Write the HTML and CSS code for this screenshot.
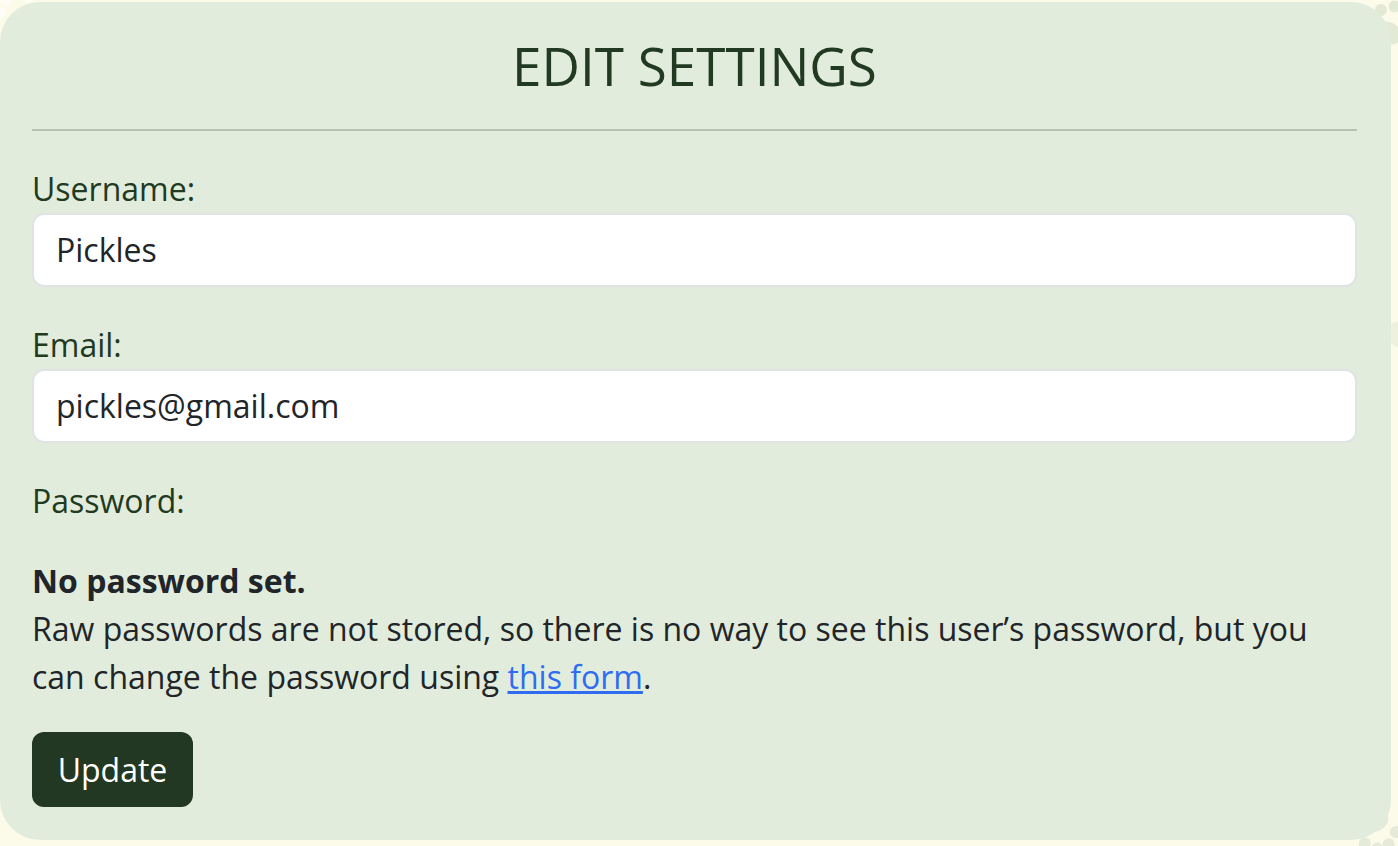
FILE: index.html
```html
<!DOCTYPE html>
<html lang="en">
<head>
<meta charset="utf-8">
<title>Edit Settings</title>
<link rel="stylesheet" href="styles.css">
</head>
<body>
<div class="paws" aria-hidden="true">
  <svg class="paw paw-tl" viewBox="0 0 60 60"><g fill="currentColor"><ellipse cx="30" cy="40" rx="14" ry="11"/><circle cx="14" cy="22" r="6"/><circle cx="25" cy="13" r="6"/><circle cx="37" cy="13" r="6"/><circle cx="47" cy="22" r="6"/></g></svg>
  <svg class="paw paw-tr" viewBox="0 0 60 60"><g fill="currentColor"><ellipse cx="30" cy="40" rx="14" ry="11"/><circle cx="14" cy="22" r="6"/><circle cx="25" cy="13" r="6"/><circle cx="37" cy="13" r="6"/><circle cx="47" cy="22" r="6"/></g></svg>
  <svg class="paw paw-r" viewBox="0 0 60 60"><g fill="currentColor"><ellipse cx="30" cy="40" rx="14" ry="11"/><circle cx="14" cy="22" r="6"/><circle cx="25" cy="13" r="6"/><circle cx="37" cy="13" r="6"/><circle cx="47" cy="22" r="6"/></g></svg>
  <svg class="paw paw-br" viewBox="0 0 60 60"><g fill="currentColor"><ellipse cx="30" cy="40" rx="14" ry="11"/><circle cx="14" cy="22" r="6"/><circle cx="25" cy="13" r="6"/><circle cx="37" cy="13" r="6"/><circle cx="47" cy="22" r="6"/></g></svg>
</div>
<main class="card">
  <h1 class="title">EDIT SETTINGS</h1>
  <hr class="divider">
  <form class="form">
    <div class="field">
      <label class="label" for="username">Username:</label>
      <input class="input" id="username" type="text" value="Pickles">
    </div>
    <div class="field">
      <label class="label" for="email">Email:</label>
      <input class="input" id="email" type="email" value="pickles@gmail.com">
    </div>
    <div class="field field-pw">
      <span class="label">Password:</span>
    </div>
    <div class="help">
      <strong>No password set.</strong><br>
      Raw passwords are not stored, so there is no way to see this user’s password, but you can change the password using <a href="#">this form</a>.
    </div>
    <button class="btn" type="button">Update</button>
  </form>
</main>
</body>
</html>
```

FILE: styles.css
```css
* { box-sizing: border-box; }

html, body {
  margin: 0;
  padding: 0;
  height: 846px;
  overflow: hidden;
  background: #fcfbea;
  font-family: "Open Sans", "Noto Sans", sans-serif;
  color: #212529;
}

.paws {
  position: absolute;
  inset: 0;
  pointer-events: none;
}

.paw {
  position: absolute;
  width: 60px;
  height: 60px;
}

.paw-tl { left: -12px; top: -18px; color: #ffffff; opacity: 0.6; transform: rotate(-30deg); }
.paw-tr { left: 1362px; top: -6px; color: #e2ead6; transform: rotate(25deg); }
.paw-r { left: 1378px; top: 300px; color: #eef1de; transform: rotate(60deg); }
.paw-br { left: 1348px; top: 800px; color: #e6ebd9; transform: rotate(160deg); }

.card {
  position: relative;
  width: 1391px;
  margin: 2px 0 0 0;
  height: 838px;
  background: #e1ecdc;
  border-radius: 40px;
  padding: 30px 34px 33px 32px;
}

.title {
  margin: 0;
  font-size: 53px;
  line-height: 67px;
  font-weight: 400;
  text-align: center;
  color: #213a21;
}

.divider {
  margin: 30px 0 0 0;
  border: 0;
  border-top: 2px solid #b5c3af;
  height: 0;
}

.form {
  display: flex;
  flex-direction: column;
  align-items: flex-start;
  padding-top: 34px;
}

.field {
  display: flex;
  flex-direction: column;
  width: 100%;
  margin-bottom: 34px;
}

.field-pw { margin-bottom: 32px; }

.label {
  font-size: 32px;
  line-height: 48px;
  color: #1f3a1f;
}

.input {
  width: 100%;
  height: 74px;
  margin: 0;
  padding: 10px 22px 12px;
  border: 2px solid #dfe3e6;
  border-radius: 12px;
  background: #ffffff;
  font-family: inherit;
  font-size: 32px;
  line-height: 48px;
  color: #212529;
  outline: none;
}

.help {
  font-size: 32px;
  line-height: 48px;
  color: #212529;
}

.help strong { font-weight: 700; }

.help a {
  color: #2f6cf2;
  text-decoration: underline;
}

.btn {
  margin-top: 31px;
  width: 161px;
  height: 75px;
  padding: 0;
  border: 0;
  border-radius: 12px;
  background: #223822;
  color: #ffffff;
  font-family: inherit;
  font-size: 32px;
  line-height: 48px;
}
```
